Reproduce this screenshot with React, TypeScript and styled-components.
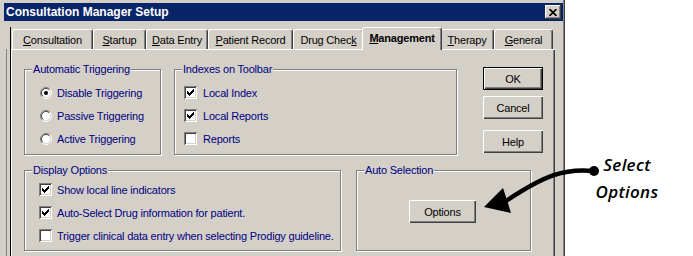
import React from "react"
import styled, { createGlobalStyle } from "styled-components"

const face = '#d4d0c8'
const shadow = '#808080'
const darkShadow = '#404040'
const navy = '#000080'
const uiFont = `"Liberation Sans", Arial, sans-serif`

const tabs = [
    { label: 'Consultation', hot: 0, width: 81 },
    { label: 'Startup', hot: 0, width: 53 },
    { label: 'Data Entry', hot: 0, width: 62 },
    { label: 'Patient Record', hot: 0, width: 85 },
    { label: 'Drug Check', hot: 9, width: 71 },
    { label: 'Management', hot: 0, width: 76, active: true },
    { label: 'Therapy', hot: 0, width: 54 },
    { label: 'General', hot: 0, width: 59 },
]

const triggering = [
    { label: 'Disable Triggering', on: true },
    { label: 'Passive Triggering', on: false },
    { label: 'Active Triggering', on: false },
]

const indexes = [
    { label: 'Local Index', on: true },
    { label: 'Local Reports', on: true },
    { label: 'Reports', on: false },
]

const display = [
    { label: 'Show local line indicators', on: true },
    { label: 'Auto-Select Drug information for patient.', on: true },
    { label: 'Trigger clinical data entry when selecting Prodigy guideline.', on: false },
]

const GlobalStyle = createGlobalStyle`
    html, body {
        margin: 0;
        padding: 0;
        background: #fff;
    }
    body {
        width: 693px;
        height: 256px;
        overflow: hidden;
        font-family: ${uiFont};
        font-size: 11px;
        letter-spacing: -0.2px;
    }
`

const Page = styled.div`
    position: relative;
    display: flex;
    width: 693px;
    height: 256px;
    overflow: hidden;
    background: #fff;
`

const Window = styled.div`
    flex: none;
    width: 565px;
    height: 300px;
    box-sizing: border-box;
    padding: 3px 2px 0 4px;
    background: ${face};
    box-shadow: inset -1px 0 0 ${darkShadow}, inset -2px 0 0 ${shadow};
`

const TitleBar = styled.div`
    display: flex;
    align-items: center;
    justify-content: space-between;
    height: 18px;
    padding: 0 2px;
    background: #0a246a;
`

const TitleText = styled.span`
    color: #fff;
    font-weight: bold;
    font-size: 12px;
    letter-spacing: 0;
`

const CloseButton = styled.div`
    display: flex;
    align-items: center;
    justify-content: center;
    width: 16px;
    height: 14px;
    box-sizing: border-box;
    background: ${face};
    box-shadow: inset -1px -1px 0 ${darkShadow}, inset 1px 1px 0 #fff, inset -2px -2px 0 ${shadow};
`

const TabArea = styled.div`
    margin: 6px 0 0 7px;
    width: 544px;
    box-shadow: -1px 0 0 #000;
`

const TabStrip = styled.div`
    display: flex;
    align-items: flex-end;
    height: 22px;
    padding-left: 1px;
`

const Tab = styled.div<{ $active?: boolean; $width: number }>`
    position: relative;
    z-index: ${p => p.$active ? 1 : 0};
    display: flex;
    align-items: center;
    justify-content: center;
    box-sizing: border-box;
    width: ${p => p.$width + (p.$active ? 4 : 0)}px;
    height: ${p => p.$active ? 23 : 20}px;
    margin: 0 ${p => p.$active ? -2 : 0}px ${p => p.$active ? -1 : 0}px;
    padding-bottom: ${p => p.$active ? 2 : 0}px;
    background: ${face};
    border-top: 1px solid #fff;
    border-left: 1px solid #fff;
    border-right: 1px solid ${darkShadow};
    border-radius: 3px 3px 0 0;
    box-shadow: inset -1px 0 0 ${shadow};
    color: #000;
    font-weight: ${p => p.$active ? 'bold' : 'normal'};
    white-space: nowrap;
`

const Panel = styled.div`
    box-sizing: border-box;
    height: 260px;
    padding: 19px 0 0 12px;
    border-top: 1px solid #fff;
    border-left: 1px solid #fff;
    box-shadow: inset -1px 0 0 ${darkShadow}, inset -2px 0 0 ${shadow},
        -1px 0 0 #000, -4px 0 0 ${face}, -5px 0 0 ${shadow};
`

const Row = styled.div<{ $gap: number; $top?: number }>`
    display: flex;
    align-items: flex-start;
    gap: ${p => p.$gap}px;
    margin-top: ${p => p.$top || 0}px;
`

const Group = styled.div<{ $width: number; $height: number; $pad: string }>`
    position: relative;
    box-sizing: border-box;
    width: ${p => p.$width}px;
    height: ${p => p.$height}px;
    padding: ${p => p.$pad};
    border: 1px solid ${shadow};
    box-shadow: inset 1px 1px 0 #fff, 1px 1px 0 #fff;
`

const Caption = styled.span`
    position: absolute;
    top: -7px;
    left: 7px;
    padding: 0 1px;
    line-height: 13px;
    background: ${face};
    color: ${navy};
`

const OptionRow = styled.div<{ $gap: number }>`
    display: flex;
    align-items: center;
    gap: ${p => p.$gap}px;
    height: 23px;
    color: ${navy};
    white-space: nowrap;
`

const CheckBox = styled.span`
    display: flex;
    align-items: center;
    justify-content: center;
    flex: none;
    width: 13px;
    height: 13px;
    box-sizing: border-box;
    background: #fff;
    box-shadow: inset 1px 1px 0 ${shadow}, inset -1px -1px 0 #fff, inset 2px 2px 0 ${darkShadow}, inset -2px -2px 0 ${face};
`

const ButtonColumn = styled.div`
    display: flex;
    flex-direction: column;
    margin: -2px 0 0 13px;
`

const PushButton = styled.div<{ $default?: boolean; $width: number; $top?: number }>`
    display: flex;
    align-items: center;
    justify-content: center;
    box-sizing: border-box;
    width: ${p => p.$width}px;
    height: 23px;
    margin-top: ${p => p.$top || 0}px;
    background: ${face};
    color: #000;
    border: ${p => p.$default ? '1px solid #000' : 'none'};
    box-shadow: inset 1px 1px 0 #fff, inset -1px -1px 0 ${darkShadow}, inset -2px -2px 0 ${shadow};
`

const Annotation = styled.div`
    flex: 1;
    display: flex;
    flex-direction: column;
    align-items: center;
    padding: 151px 4px 0 0;
    font-family: "Open Sans", "DejaVu Sans", sans-serif;
    font-style: italic;
    font-weight: 600;
    font-size: 17px;
    line-height: 27px;
    letter-spacing: 0.3px;
    color: #000;
`

const ArrowLayer = styled.svg`
    position: absolute;
    left: 0;
    top: 0;
    pointer-events: none;
`

const Hot: React.FC<{ text: string; hot: number }> = ({ text, hot }) => (
    <>
        {text.slice(0, hot)}<u>{text[hot]}</u>{text.slice(hot + 1)}
    </>
)

const Check: React.FC<{ on: boolean }> = ({ on }) => (
    <CheckBox>
        {on && (
            <svg width="7" height="7" viewBox="0 0 7 7" shapeRendering="crispEdges">
                <path d="M6 0h1v1h-1z M5 1h2v1h-2z M0 2h1v1h-1z M4 2h3v1h-3z M0 3h2v1h-2z M3 3h3v1h-3z M0 4h5v1h-5z M1 5h3v1h-3z M2 6h1v1h-1z" fill="#000" />
            </svg>
        )}
    </CheckBox>
)

const Radio: React.FC<{ on: boolean }> = ({ on }) => (
    <svg width="12" height="12" viewBox="0 0 12 12" style={{ flex: 'none' }}>
        <circle cx="6" cy="6" r="5" fill="#fff" />
        <path d="M2.1 9.9 A5.5 5.5 0 0 1 9.9 2.1" fill="none" stroke={shadow} />
        <path d="M9.9 2.1 A5.5 5.5 0 0 1 2.1 9.9" fill="none" stroke="#fff" />
        <path d="M2.8 9.2 A4.5 4.5 0 0 1 9.2 2.8" fill="none" stroke={darkShadow} />
        <path d="M9.2 2.8 A4.5 4.5 0 0 1 2.8 9.2" fill="none" stroke={face} />
        {on && <circle cx="6" cy="6" r="2" fill="#000" />}
    </svg>
)

const App: React.FC = (): JSX.Element => {
    return (
        <Page>
            <GlobalStyle />
            <Window>
                <TitleBar>
                    <TitleText>{`Consultation Manager Setup`}</TitleText>
                    <CloseButton>
                        <svg width="8" height="7" viewBox="0 0 8 7">
                            <path d="M0.5 0 L7.5 7 M7.5 0 L0.5 7" stroke="#000" strokeWidth="1.7" />
                        </svg>
                    </CloseButton>
                </TitleBar>

                <TabArea>
                    <TabStrip>
                        {tabs.map(t => (
                            <Tab key={t.label} $active={t.active} $width={t.width}>
                                <Hot text={t.label} hot={t.hot} />
                            </Tab>
                        ))}
                    </TabStrip>
                    <Panel>
                        <Row $gap={13}>
                            <Group $width={137} $height={86} $pad="11px 0 0 15px">
                                <Caption>{`Automatic Triggering`}</Caption>
                                {triggering.map(o => (
                                    <OptionRow key={o.label} $gap={5}>
                                        <Radio on={o.on} />
                                        {o.label}
                                    </OptionRow>
                                ))}
                            </Group>
                            <Group $width={283} $height={86} $pad="11px 0 0 9px">
                                <Caption>{`Indexes on Toolbar`}</Caption>
                                {indexes.map(o => (
                                    <OptionRow key={o.label} $gap={6}>
                                        <Check on={o.on} />
                                        {o.label}
                                    </OptionRow>
                                ))}
                            </Group>
                            <ButtonColumn>
                                <PushButton $default $width={60}>{`OK`}</PushButton>
                                <PushButton $width={60} $top={6}>{`Cancel`}</PushButton>
                                <PushButton $width={60} $top={11}>{`Help`}</PushButton>
                            </ButtonColumn>
                        </Row>

                        <Row $gap={15} $top={15}>
                            <Group $width={317} $height={81} $pad="7px 0 0 14px">
                                <Caption>{`Display Options`}</Caption>
                                {display.map(o => (
                                    <OptionRow key={o.label} $gap={5}>
                                        <Check on={o.on} />
                                        {o.label}
                                    </OptionRow>
                                ))}
                            </Group>
                            <Group $width={175} $height={81} $pad="29px 0 0 52px">
                                <Caption>{`Auto Selection`}</Caption>
                                <PushButton $width={67}>{`Options`}</PushButton>
                            </Group>
                        </Row>
                    </Panel>
                </TabArea>
            </Window>

            <Annotation>
                <span>{`Select`}</span>
                <span>{`Options`}</span>
            </Annotation>

            <ArrowLayer width="693" height="256" viewBox="0 0 693 256">
                <path d="M594 171 C565 168 545 175 506 201" fill="none" stroke="#000" strokeWidth="4.5" />
                <circle cx="594" cy="171" r="5" fill="#000" />
                <polygon points="484,207 503,188 507,200 511,213" fill="#000" />
            </ArrowLayer>
        </Page>
    )
}

export default App
